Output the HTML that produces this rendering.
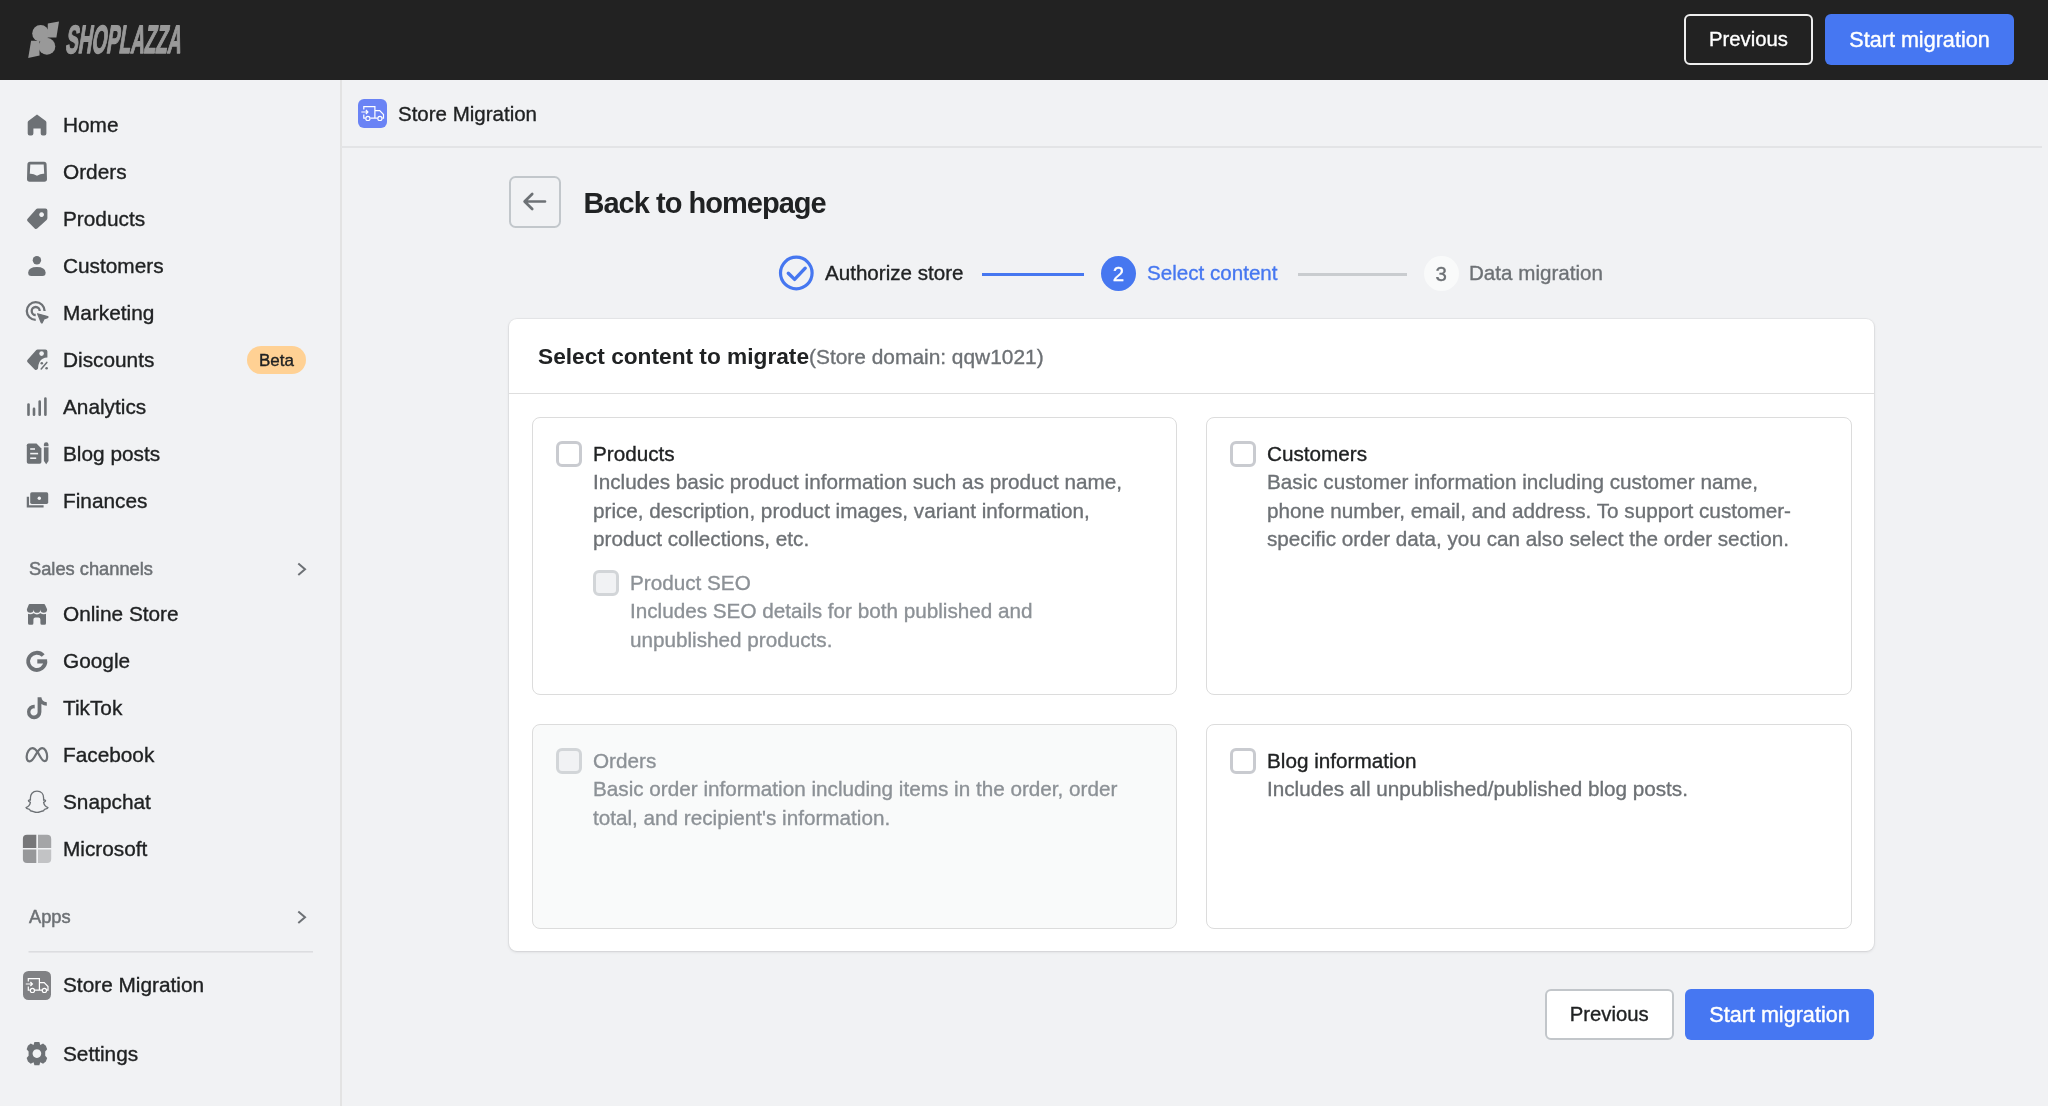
<!DOCTYPE html>
<html><head><meta charset="utf-8">
<style>
*{box-sizing:border-box;margin:0;padding:0}
html,body{width:2048px;height:1106px;overflow:hidden;background:#f1f2f4;font-family:"Liberation Sans",sans-serif;color:#202223}
.abs{position:absolute}
div,span{-webkit-text-stroke:0.35px currentColor}
#top{left:0;top:0;width:2048px;height:80px;background:#222222}
#side{left:0;top:80px;width:342px;height:1026px;border-right:2px solid #e3e3e3;background:#f1f2f4}
.nav{position:absolute;left:0;height:40px;width:340px}
.nav .ic{position:absolute;left:24px;top:8px;width:25px;height:25px}
.nav .tx{position:absolute;left:63px;top:0;line-height:40px;font-size:20.8px;color:#202223;white-space:nowrap}
.sec{position:absolute;left:29px;font-size:18.3px;color:#6d7175;line-height:30px;-webkit-text-stroke:0.5px #6d7175}
.chev{position:absolute;left:296px;width:12px;height:16px}
.btn{position:absolute;border-radius:6px;font-size:20.3px;line-height:50px;text-align:center;white-space:nowrap}
.card{position:absolute;background:#fff;border-radius:8px}
.sub{position:absolute;border:1px solid #dcdcdc;border-radius:8px;background:#fff}
.cb{position:absolute;width:26px;height:26px;border:3px solid #c9cbd0;border-radius:6px;background:#fff}
.ttl{position:absolute;font-size:20.5px;color:#202223;line-height:28px;white-space:nowrap}
.st{top:259px;font-size:20.6px;line-height:28px;white-space:nowrap}
.desc{position:absolute;font-size:20.7px;color:#6d7175;line-height:28.5px;white-space:nowrap}
</style></head>
<body><div style="position:absolute;left:0;top:0;width:2048px;height:1106px;will-change:transform">
<div id="top" class="abs">
  <svg class="abs" style="left:0;top:0" width="200" height="80" viewBox="0 0 200 80">
<g fill="#999999">
<circle cx="40.6" cy="33.4" r="8.4"/>
<circle cx="46.9" cy="46.4" r="8.4"/>
<path d="M47.8 23.6 L59 21.6 L56.4 37.4 L47.5 37.4 Z"/>
<path d="M31.1 40.8 L39.2 40.8 L39.6 55.4 L28.2 58 Z"/>
<path d="M39 41.5 L49 38.5 L48.5 38 Z"/>
</g>
<text x="0" y="0" transform="translate(64.8 53) skewX(-9)" font-family="Liberation Sans" font-weight="bold" font-size="39.5" fill="#999999" stroke="#999999" stroke-width="1.5" stroke-linejoin="round" textLength="115.5" lengthAdjust="spacingAndGlyphs">SHOPLAZZA</text>
</svg>
  <div class="btn" style="left:1684px;top:14px;width:129px;height:51px;border:2px solid #eeeeee;color:#fff;line-height:47px">Previous</div>
  <div class="btn" style="left:1825px;top:14px;width:189px;height:51px;background:#4677f2;color:#fff;line-height:51.5px;font-size:21.6px;-webkit-text-stroke:0.4px #fff">Start migration</div>
</div>

<div id="side" class="abs">
  <div class="nav" style="top:25px"><div class="tx">Home</div></div>
  <div class="nav" style="top:72px"><div class="tx">Orders</div></div>
  <div class="nav" style="top:119px"><div class="tx">Products</div></div>
  <div class="nav" style="top:166px"><div class="tx">Customers</div></div>
  <div class="nav" style="top:213px"><div class="tx">Marketing</div></div>
  <div class="nav" style="top:260px"><div class="tx">Discounts</div></div>
  <div class="nav" style="top:307px"><div class="tx">Analytics</div></div>
  <div class="nav" style="top:354px"><div class="tx">Blog posts</div></div>
  <div class="nav" style="top:401px"><div class="tx">Finances</div></div>
  <div class="sec" style="top:474px">Sales channels</div>
  <div class="nav" style="top:514px"><div class="tx">Online Store</div></div>
  <div class="nav" style="top:561px"><div class="tx">Google</div></div>
  <div class="nav" style="top:608px"><div class="tx">TikTok</div></div>
  <div class="nav" style="top:655px"><div class="tx">Facebook</div></div>
  <div class="nav" style="top:702px"><div class="tx">Snapchat</div></div>
  <div class="nav" style="top:749px"><div class="tx">Microsoft</div></div>
  <div class="sec" style="top:822px">Apps</div>
  <div class="nav" style="top:885px"><div class="tx">Store Migration</div></div>
  <div class="nav" style="top:954px"><div class="tx">Settings</div></div>
</div>


<svg class="abs" style="left:0;top:0" width="341" height="1106" viewBox="0 0 341 1106">
<g fill="#6d7175">
<!-- home -->
<path d="M37 114.6 L45.8 121 Q46.4 121.5 46.4 122.5 V133.6 Q46.4 135.6 44.4 135.6 H42.7 Q40.7 135.6 40.7 133.6 V128.5 H33.4 V133.6 Q33.4 135.6 31.4 135.6 H29.7 Q27.7 135.6 27.7 133.6 V122.5 Q27.7 121.5 28.3 121 Z"/>
<!-- orders -->
<path fill-rule="evenodd" d="M30 161.8 H44 Q46.5 161.8 46.6 164.5 L47 179 Q47 181.8 44.3 181.8 H29.7 Q27 181.8 27 179 L27.4 164.5 Q27.5 161.8 30 161.8 Z M30.3 164.4 H43.7 L44.2 173.7 Q41 173.3 37 175.8 Q33 173.3 29.8 173.7 Z"/>
<!-- products tag -->
<path fill-rule="evenodd" d="M37.6 208.5 H45.4 Q47.4 208.5 47.4 210.5 V218 Q47.4 219.1 46.6 219.9 L37.2 228.6 Q35.9 229.6 34.7 228.4 L27.6 221.2 Q26.4 219.9 27.6 218.7 L36.3 209.1 Q36.8 208.5 37.6 208.5 Z M41.6 212.2 A2.4 2.4 0 1 0 41.61 212.2 Z"/>
<!-- customers -->
<circle cx="36.9" cy="260.2" r="4.2"/>
<path d="M28.2 272.5 Q28.6 267 36.9 267 Q45.2 267 45.6 272.5 Q45.8 276 42.4 276 H31.4 Q28 276 28.2 272.5 Z"/>
<!-- analytics -->
<g stroke="#6d7175" stroke-width="2.6" stroke-linecap="round">
<line x1="28.5" y1="404.6" x2="28.5" y2="414.8"/><line x1="34" y1="408.9" x2="34" y2="414.8"/><line x1="39.7" y1="401.5" x2="39.7" y2="414.8"/><line x1="45.4" y1="398.5" x2="45.4" y2="414.8"/>
</g>
<!-- blog -->
<path d="M28.6 443.5 H36.5 L41.4 448.6 V461.9 Q41.4 463.7 39.6 463.7 H28.6 Q26.8 463.7 26.8 461.9 V445.3 Q26.8 443.5 28.6 443.5 Z"/>
<g stroke="#f1f2f4" stroke-width="1.6"><line x1="30.2" y1="449" x2="35" y2="449"/><line x1="30.2" y1="453.6" x2="38.1" y2="453.6"/><line x1="30.2" y1="458.2" x2="36.2" y2="458.2"/></g>
<path d="M43.9 444.6 Q43.9 442.3 46.2 442.3 Q48.5 442.3 48.5 444.6 V461 L46.2 464.3 L43.9 461 Z"/>
<rect x="43" y="446.2" width="6.5" height="1.1" fill="#f1f2f4"/>
<!-- finances -->
<rect x="30.2" y="492.3" width="18" height="11.6" rx="1.6"/>
<circle cx="39.3" cy="498.2" r="1.7" fill="#f1f2f4"/>
<path d="M27.9 496.8 V506.4 H43.6" fill="none" stroke="#6d7175" stroke-width="2.3"/>
<!-- online store -->
<path d="M28 611 H46 V623.2 Q46 624.7 44.5 624.7 H41.9 Q40.4 624.7 40.4 623.2 V619.5 Q40.4 617.5 38.4 617.5 H35.4 Q33.4 617.5 33.4 619.5 V623.2 Q33.4 624.7 31.9 624.7 H29.5 Q28 624.7 28 623.2 Z"/>
<path d="M29.6 604.1 H44.1 Q44.6 604.1 44.9 604.6 L47 609 Q47.1 609.3 47.1 609.5 A3.37 3.37 0 0 1 40.37 609.5 A3.37 3.37 0 0 1 33.63 609.5 A3.37 3.37 0 0 1 26.9 609.5 Q26.9 609.3 27 609 L28.8 604.6 Q29.1 604.1 29.6 604.1 Z" stroke="#f1f2f4" stroke-width="3.2" paint-order="stroke"/>
<!-- google -->
<path d="M43.2 655.6 A8.6 8.6 0 1 0 45.4 661.5" fill="none" stroke="#6d7175" stroke-width="3.8"/>
<rect x="37.3" y="659.3" width="9.8" height="4.2"/>
<!-- tiktok -->
<path d="M37.6 697.2 H41.4 Q41.8 701.6 46.8 702.3 V705.8 Q43.6 705.6 41.4 703.9 V712 A7.2 7.2 0 1 1 34.7 704.8 V708.4 A3.6 3.6 0 1 0 37.6 712 Z"/>
<!-- microsoft -->
<path d="M27 834.8 H36.3 V847.9 H22.9 V838.9 Q22.9 834.8 27 834.8 Z" fill="#777779"/>
<path d="M38 834.8 H47.1 Q51.2 834.8 51.2 838.9 V847.9 H38 Z" fill="#a4a5a7"/>
<path d="M22.9 849.6 H36.3 V863 H27 Q22.9 863 22.9 858.9 Z" fill="#97989a"/>
<path d="M38 849.6 H51.2 V858.9 Q51.2 863 47.1 863 H38 Z" fill="#c2c3c5"/>
<!-- store migration -->
<rect x="23" y="971" width="28" height="29" rx="5.5" fill="#808184"/>
<!-- settings gear -->
<path transform="translate(36.9 1053.6) scale(1.08) translate(-36.9 -1053.6)" fill-rule="evenodd" d="M34.6 1042.8 H39.2 L40 1045.6 L42.6 1044.2 L45.2 1046.4 L46.4 1049.6 L44.6 1051.6 L44.6 1055.6 L46.4 1057.6 L45.2 1060.8 L42.6 1063 L40 1061.6 L39.2 1064.4 H34.6 L33.8 1061.6 L31.2 1063 L28.6 1060.8 L27.4 1057.6 L29.2 1055.6 L29.2 1051.6 L27.4 1049.6 L28.6 1046.4 L31.2 1044.2 L33.8 1045.6 Z M36.9 1049.6 A4 4 0 1 0 36.91 1049.6 Z"/>
</g>
<!-- marketing -->
<g fill="none" stroke="#6d7175" stroke-width="2.3">
<path d="M44.6 311 A8.9 8.9 0 1 0 35.7 319.9"/>
<path d="M39.7 311 A4 4 0 1 0 35.7 315"/>
</g>
<path d="M37.6 313.8 L47.6 316.6 Q48.6 317 47.6 317.6 L44 318.9 L42.3 322.6 Q41.7 323.5 41.2 322.5 Z" fill="#6d7175" stroke="#6d7175" stroke-width="1.2" stroke-linejoin="round"/>
<!-- discounts -->
<path d="M37.6 349.5 H45.4 Q47.4 349.5 47.4 351.5 V357.5 Q42 357.5 39.5 362 Q38 365 38 368.5 L37.2 369.6 Q35.9 370.6 34.7 369.4 L27.6 362.2 Q26.4 360.9 27.6 359.7 L36.3 350.1 Q36.8 349.5 37.6 349.5 Z" fill="#6d7175"/>
<circle cx="41.6" cy="353.6" r="2.3" fill="#f1f2f4"/>
<g fill="#6d7175"><circle cx="41.8" cy="363.2" r="1.3"/><circle cx="46.6" cy="368.2" r="1.3"/></g>
<line x1="46.8" y1="362.4" x2="41.2" y2="369" stroke="#6d7175" stroke-width="1.5" stroke-linecap="round"/>
<!-- meta -->
<path d="M29.6 761.4 C27.2 761.4 26.5 758.6 26.7 756.3 C27 752 29.5 748.1 32.4 748.1 C34.6 748.1 36.1 749.9 37.5 751.9 C39.6 755 41.6 761.2 44.7 761.2 C46.6 761.2 47.2 759 47.1 756.3 C47 752 45 748.1 42.3 748.1 C40.2 748.1 38.6 750.2 37.3 752 C35.3 755 33.2 761.4 29.6 761.4 Z" fill="none" stroke="#6d7175" stroke-width="2.2"/>
<!-- snapchat -->
<path d="M37 791.2 C32.5 791.2 30.4 794.5 30.4 798 V800.2 C29.5 799.8 28.4 800 28.4 800.8 C28.4 801.6 29.8 802 30.4 802.3 C30 804.6 28 806.8 26 807.6 C26.3 808.8 28.2 809 29.6 809.4 C30 810.4 30.2 811 31 811 C32.8 810.8 34.2 812.4 37 812.4 C39.8 812.4 41.2 810.8 43 811 C43.8 811 44 810.4 44.4 809.4 C45.8 809 47.7 808.8 48 807.6 C46 806.8 44 804.6 43.6 802.3 C44.2 802 45.6 801.6 45.6 800.8 C45.6 800 44.5 799.8 43.6 800.2 V798 C43.6 794.5 41.5 791.2 37 791.2 Z" fill="none" stroke="#6d7175" stroke-width="1.3" stroke-linejoin="round"/>
<!-- chevrons -->
<path d="M298.3 563.5 L305 569.2 L298.3 574.9" fill="none" stroke="#6d7175" stroke-width="2"/>
<path d="M298.3 911.5 L305 917.2 L298.3 922.9" fill="none" stroke="#6d7175" stroke-width="2"/>
<!-- separator -->
<rect x="28.5" y="951" width="284.5" height="1.6" fill="#dcdde0"/>
<!-- truck in store migration -->
<g fill="none" stroke="#fff" stroke-width="1.2">
<path d="M28.3 981.5 V978.6 H39.4 V990.2 H35 M39.6 982.6 H44.2 L48 986.6 V990.2 H46.8 M39.4 990.2 H42"/>
<path d="M28.3 986.6 V990.2 H29.8"/>
<circle cx="32.4" cy="990.4" r="2.1"/><circle cx="44.4" cy="990.4" r="2.1"/>
<path d="M25.8 984 H32.4 M30.4 982 L32.4 984 L30.4 986"/>
</g>
</svg>
<div class="abs" style="left:247px;top:345.5px;width:59px;height:28.5px;border-radius:15px;background:#ffd194;font-size:17px;line-height:30.5px;text-align:center;color:#202223">Beta</div>

<div class="abs" style="left:341px;top:80px;width:1701px;height:68px;border-bottom:2px solid #e3e4e6">
  <div class="abs" style="left:17px;top:19px;width:29px;height:29px;border-radius:6px;background:#6a83f5"></div>
<svg class="abs" style="left:17px;top:19px" width="29" height="29" viewBox="23 971 28 29"><g fill="none" stroke="#fff" stroke-width="1.2">
<path d="M28.3 981.5 V978.6 H39.4 V990.2 H35 M39.6 982.6 H44.2 L48 986.6 V990.2 H46.8 M39.4 990.2 H42"/>
<path d="M28.3 986.6 V990.2 H29.8"/>
<circle cx="32.4" cy="990.4" r="2.1"/><circle cx="44.4" cy="990.4" r="2.1"/>
<path d="M25.8 984 H32.4 M30.4 982 L32.4 984 L30.4 986"/>
</g></svg>
  <div class="abs" style="left:57px;top:19px;line-height:30px;font-size:20.5px;color:#202223">Store Migration</div>
</div>

<div class="abs" style="left:509px;top:176px;width:51.5px;height:51.8px;border:2px solid #c2c7cb;border-radius:6.5px"></div>
<svg class="abs" style="left:509px;top:176px" width="51" height="51" viewBox="0 0 51 51"><path d="M36 25.5 H15.8 M23.2 18 L15.6 25.5 L23.2 33" fill="none" stroke="#6d7175" stroke-width="2.7" stroke-linecap="round" stroke-linejoin="round"/></svg>
<div class="abs" style="left:583.5px;top:185px;font-size:29px;font-weight:bold;-webkit-text-stroke:0;line-height:36px;letter-spacing:-0.98px;color:#202223;white-space:nowrap">Back to homepage</div>

<div class="card" style="left:509px;top:319px;width:1365px;height:632px;box-shadow:0 0 0 1px rgba(63,63,68,0.05),0 1px 3px rgba(63,63,68,0.15)">
  <div class="abs" style="left:0;top:0;width:1365px;height:75px;border-bottom:1px solid #dedede"></div>
  <div class="abs" style="left:29px;top:22px;line-height:30px;white-space:nowrap"><span style="font-size:22.7px;font-weight:bold;color:#202223;-webkit-text-stroke:0">Select content to migrate</span><span style="font-size:20.9px;color:#6d7175">(Store domain: qqw1021)</span></div>
</div>


<!-- stepper -->
<svg class="abs" style="left:777px;top:254px" width="38" height="38" viewBox="0 0 38 38"><circle cx="19.3" cy="19" r="15.8" fill="none" stroke="#4677f0" stroke-width="3.2"/><path d="M11.3 19.2 L17.6 25.4 L28.2 14.2" fill="none" stroke="#4677f0" stroke-width="3.4" stroke-linecap="round" stroke-linejoin="round"/></svg>
<div class="abs st" style="left:825px;color:#202223">Authorize store</div>
<div class="abs" style="left:982px;top:272.5px;width:102px;height:3.5px;background:#4677f0"></div>
<div class="abs" style="left:1101px;top:255.5px;width:35px;height:35px;border-radius:50%;background:#4677f0;color:#fff;font-size:20.5px;line-height:35px;text-align:center">2</div>
<div class="abs st" style="left:1147px;color:#4677f0">Select content</div>
<div class="abs" style="left:1298px;top:272.5px;width:109px;height:3.5px;background:#c9cccf"></div>
<div class="abs" style="left:1424px;top:255.5px;width:34.5px;height:35px;border-radius:50%;background:#f9fafa;color:#6d7175;font-size:20.5px;line-height:35px;text-align:center">3</div>
<div class="abs st" style="left:1469px;color:#6d7175">Data migration</div>

<!-- subcards -->
<div class="sub" style="left:532px;top:417px;width:645px;height:278px"></div>
<div class="sub" style="left:1206px;top:417px;width:646px;height:278px"></div>
<div class="sub" style="left:532px;top:724px;width:645px;height:205px;background:#f9fafa"></div>
<div class="sub" style="left:1206px;top:724px;width:646px;height:205px"></div>

<div class="cb" style="left:556px;top:441px"></div>
<div class="desc" style="left:593px;top:439.5px"><span style="color:#202223">Products</span><br>Includes basic product information such as product name,<br>price, description, product images, variant information,<br>product collections, etc.</div>
<div class="cb" style="left:593px;top:570px;background:#f1f2f4;border-color:#d2d5d8"></div>
<div class="desc" style="left:630px;top:568.7px;color:#8c9196">Product SEO<br>Includes SEO details for both published and<br>unpublished products.</div>

<div class="cb" style="left:1230px;top:441px"></div>
<div class="desc" style="left:1267px;top:439.5px"><span style="color:#202223">Customers</span><br>Basic customer information including customer name,<br>phone number, email, and address. To support customer-<br>specific order data, you can also select the order section.</div>

<div class="cb" style="left:556px;top:748px;background:#f1f2f4;border-color:#d2d5d8"></div>
<div class="desc" style="left:593px;top:746.5px;color:#8c9196">Orders<br>Basic order information including items in the order, order<br>total, and recipient's information.</div>

<div class="cb" style="left:1230px;top:748px"></div>
<div class="desc" style="left:1267px;top:746.5px"><span style="color:#202223">Blog information</span><br>Includes all unpublished/published blog posts.</div>

<div class="btn" style="left:1544.5px;top:988.5px;width:129.5px;height:51.5px;background:#fff;border:2px solid #c2c6ca;color:#202223;line-height:47.5px">Previous</div>
<div class="btn" style="left:1685px;top:988.5px;width:189px;height:51.5px;background:#4677f2;color:#fff;line-height:51.5px;font-size:21.6px;-webkit-text-stroke:0.4px #fff">Start migration</div>
</div></body></html>
